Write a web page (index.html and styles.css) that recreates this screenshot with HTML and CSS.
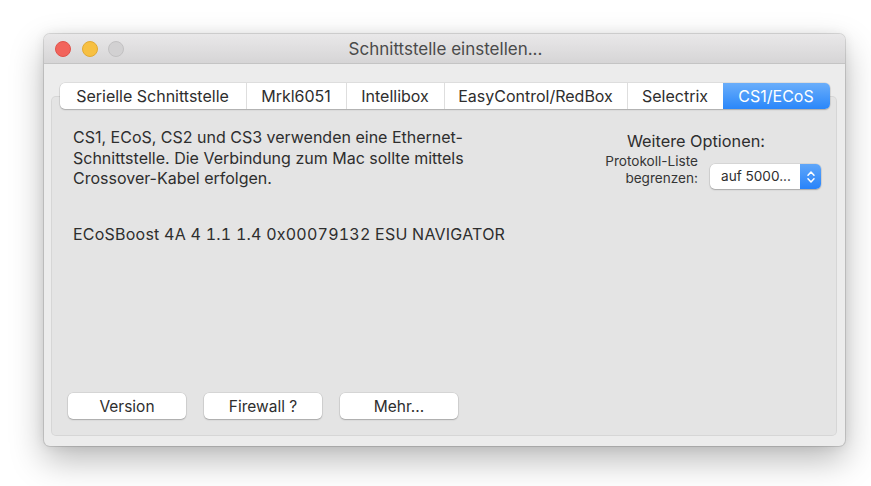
FILE: index.html
```html
<!DOCTYPE html>
<html lang="de">
<head>
<meta charset="utf-8">
<title>Schnittstelle einstellen...</title>
<link rel="stylesheet" href="styles.css">
</head>
<body>
  <div class="window">
    <header class="titlebar">
      <div class="lights">
        <span class="light close"></span>
        <span class="light minimize"></span>
        <span class="light zoom"></span>
      </div>
      <div class="title">Schnittstelle einstellen...</div>
    </header>

    <main class="window-body">
      <nav class="tabs">
        <span class="tab t1">Serielle Schnittstelle</span>
        <span class="tab t2">Mrkl6051</span>
        <span class="tab t3">Intellibox</span>
        <span class="tab t4">EasyControl/RedBox</span>
        <span class="tab t5">Selectrix</span>
        <span class="tab t6 active">CS1/ECoS</span>
      </nav>

      <section class="tabbox">
        <div class="top-row">
          <p class="description">CS1, ECoS, CS2 und CS3 verwenden eine Ethernet-<br>Schnittstelle. Die Verbindung zum Mac sollte mittels<br>Crossover-Kabel erfolgen.</p>
          <div class="options">
            <div class="options-title">Weitere Optionen:</div>
            <div class="option-row">
              <label class="option-label">Protokoll-Liste<br>begrenzen:</label>
              <div class="popup">
                <span class="popup-value">auf 5000...</span>
                <span class="stepper">
                  <svg width="10" height="16" viewBox="0 0 10 16">
                    <path d="M2 6.2 L5 3 L8 6.2" fill="none" stroke="#fff" stroke-width="1.5" stroke-linecap="round" stroke-linejoin="round"/>
                    <path d="M2 9.8 L5 13 L8 9.8" fill="none" stroke="#fff" stroke-width="1.5" stroke-linecap="round" stroke-linejoin="round"/>
                  </svg>
                </span>
              </div>
            </div>
          </div>
        </div>

        <p class="device">ECoSBoost 4A 4 1.1 1.4 0x00079132 ESU NAVIGATOR</p>

        <div class="buttons">
          <button class="btn">Version</button>
          <button class="btn">Firewall ?</button>
          <button class="btn">Mehr...</button>
        </div>
      </section>
    </main>
  </div>
</body>
</html>
```

FILE: styles.css
```css
html, body {
  margin: 0;
  padding: 0;
  background: #ffffff;
}

body {
  width: 871px;
  height: 486px;
  overflow: hidden;
  padding: 34px 0 0 44px;
  box-sizing: border-box;
  font-family: "Inter", "Liberation Sans", sans-serif;
  color: #2e2e2e;
}

.window {
  width: 801px;
  height: 412px;
  background: #ececec;
  border-radius: 6px;
  box-shadow: 0 0 0 1px rgba(0, 0, 0, 0.12), 0 14px 34px rgba(0, 0, 0, 0.28), 0 0 12px rgba(0, 0, 0, 0.08);
  display: flex;
  flex-direction: column;
  overflow: hidden;
}

/* title bar */
.titlebar {
  height: 29px;
  flex: none;
  position: relative;
  background: linear-gradient(#e9e8e9, #d6d5d6);
  border-bottom: 1px solid #c4c4c4;
  display: flex;
  align-items: center;
  justify-content: center;
}

.lights {
  position: absolute;
  left: 11px;
  top: 7px;
  display: flex;
  gap: 10.5px;
}

.light {
  width: 16px;
  height: 16px;
  border-radius: 50%;
  box-sizing: border-box;
}

.close { background: #f2645c; border: 1px solid #e0534b; }
.minimize { background: #f7c042; border: 1px solid #e2aa32; }
.zoom { background: #d2d1d2; border: 1px solid #c2c1c2; }

.title {
  font-size: 17px;
  color: #4a4a4a;
  padding-left: 2px;
}

/* content */
.window-body {
  flex: 1;
  display: flex;
  flex-direction: column;
  padding: 19px 8px 10px 7px;
}

.tabs {
  align-self: center;
  position: relative;
  z-index: 1;
  display: flex;
  height: 26px;
  margin-left: 1px;
  background: #ffffff;
  border-radius: 5px;
  box-shadow: 0 0 0 0.5px rgba(0, 0, 0, 0.12), 0 1px 1.5px rgba(0, 0, 0, 0.2);
}

.tab {
  display: flex;
  align-items: center;
  justify-content: center;
  font-size: 16px;
  color: #2e2e2e;
  border-left: 1px solid #dedede;
  box-sizing: border-box;
}

.tab:first-child { border-left: none; }

.t1 { width: 186px; }
.t2 { width: 100px; }
.t3 { width: 98px; }
.t4 { width: 183px; }
.t5 { width: 96px; }
.t6 { width: 107px; }

.tab.active {
  color: #ffffff;
  border-left: none;
  border-radius: 0 5px 5px 0;
  background: linear-gradient(#6aaefa, #2a87fa);
}

.tabbox {
  flex: 1;
  margin-top: -13px;
  background: #e4e4e4;
  border-radius: 5px;
  box-shadow: inset 0 0 0 1px rgba(0, 0, 0, 0.06);
  padding: 31px 16px 17px 17px;
  display: flex;
  flex-direction: column;
}

.top-row {
  display: flex;
  justify-content: space-between;
}

.description {
  margin: 0 0 0 5px;
  font-size: 16px;
  line-height: 20.5px;
}

.options {
  margin-top: 4px;
  display: flex;
  flex-direction: column;
  align-items: flex-end;
}

.options-title {
  font-size: 16.3px;
  line-height: 20px;
  margin-right: 56px;
}

.option-row {
  display: flex;
  align-items: flex-end;
  gap: 12px;
  margin-top: 2px;
}

.option-label {
  font-size: 13.6px;
  line-height: 17px;
  text-align: right;
  color: #353535;
  padding-bottom: 2px;
}

.popup {
  width: 111px;
  height: 25px;
  display: flex;
  background: #ffffff;
  border-radius: 5px;
  box-shadow: 0 0 0 0.5px rgba(0, 0, 0, 0.12), 0 1px 1.5px rgba(0, 0, 0, 0.22);
  overflow: hidden;
}

.popup-value {
  flex: 1;
  font-size: 13.6px;
  line-height: 25px;
  padding-left: 11px;
  color: #2e2e2e;
}

.stepper {
  width: 21px;
  display: flex;
  align-items: center;
  justify-content: center;
  background: linear-gradient(#5fa6f9, #2883fa);
}

.device {
  margin: 35px 0 0 5px;
  font-size: 16px;
  line-height: 20px;
  letter-spacing: 0.23px;
  font-feature-settings: "tnum";
}

.buttons {
  margin-top: auto;
  display: flex;
  gap: 18px;
}

.btn {
  width: 118px;
  height: 26px;
  padding: 0;
  border: none;
  border-radius: 5px;
  background: #ffffff;
  box-shadow: 0 0 0 0.5px rgba(0, 0, 0, 0.12), 0 1px 1.5px rgba(0, 0, 0, 0.22);
  font-family: inherit;
  font-size: 15.5px;
  color: #2e2e2e;
}
```
